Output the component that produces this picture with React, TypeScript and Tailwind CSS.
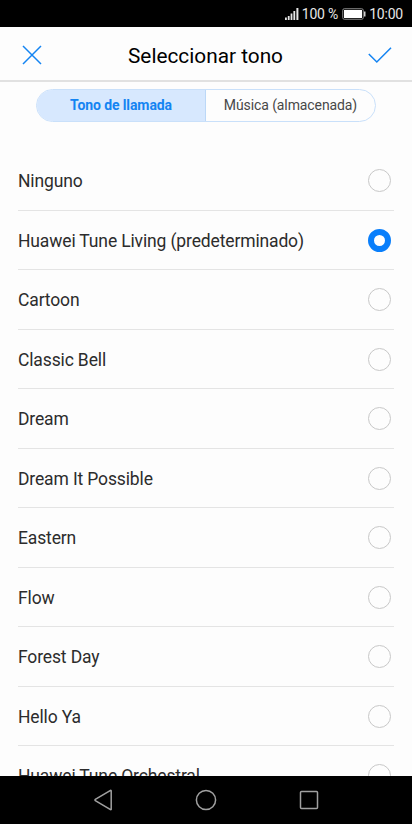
import { useState } from 'react';
import clsx from 'clsx';

const ringtones = [
  'Ninguno',
  'Huawei Tune Living (predeterminado)',
  'Cartoon',
  'Classic Bell',
  'Dream',
  'Dream It Possible',
  'Eastern',
  'Flow',
  'Forest Day',
  'Hello Ya',
  'Huawei Tune Orchestral',
];

function StatusBar() {
  return (
    <div className="flex h-[27px] shrink-0 items-center justify-end bg-black pr-[9px] pt-px text-[14px] leading-none tracking-[-0.2px] text-[#e6e6e6]">
      <svg width="14" height="13" viewBox="0 0 14 13" className="mr-[3px] -mt-px" fill="#e6e6e6">
        <rect x="0" y="10.5" width="1.8" height="2.5" />
        <rect x="2.8" y="9" width="1.8" height="4" />
        <rect x="5.6" y="6.5" width="1.8" height="6.5" />
        <rect x="8.4" y="4" width="1.8" height="9" />
        <rect x="11.4" y="1" width="2" height="12" />
      </svg>
      <span className="whitespace-nowrap">100 %</span>
      <svg width="24" height="12" viewBox="0 0 24 12" className="ml-[4px] mr-[3px]">
        <rect x="0.75" y="0.75" width="20.5" height="10.5" rx="1.5" fill="none" stroke="#8c8c8c" />
        <rect x="2" y="2" width="18" height="8" fill="#fff" />
        <rect x="22" y="3.5" width="1.5" height="5" fill="#d0d0d0" />
      </svg>
      <span>10:00</span>
    </div>
  );
}

function Header() {
  return (
    <header className="flex h-[55px] shrink-0 items-center justify-between border-b-2 border-[#e1e1e1] px-[20px] pt-[3px]">
      <button aria-label="Cancelar">
        <svg width="24" height="24" viewBox="0 0 24 24" fill="none" stroke="#1484f2" strokeWidth="1.5">
          <path d="M3 3l18 18M21 3L3 21" />
        </svg>
      </button>
      <h1 className="pt-[2px] pr-px text-[20.8px] leading-6 text-black">Seleccionar tono</h1>
      <button aria-label="Aceptar">
        <svg width="24" height="24" viewBox="0 0 24 24" fill="none" stroke="#1484f2" strokeWidth="1.5">
          <path d="M.8 11l8 8L23 4.7" />
        </svg>
      </button>
    </header>
  );
}

export default function App() {
  const [selected, setSelected] = useState(1);

  return (
    <div className="flex h-screen flex-col overflow-hidden bg-[#fdfdfd] font-['Roboto',sans-serif]">
      <StatusBar />
      <Header />

      <div className="mx-[36px] mt-[7px] flex h-[33px] w-[340px] shrink-0 overflow-hidden rounded-full border border-[#c9e0fa] text-[14px] tracking-[-0.1px]">
        <button className="w-[169px] border-r border-[#bcd8f7] bg-[#d7e8fe] font-bold text-[#1484f2]">
          Tono de llamada
        </button>
        <button className="flex-1 text-[#484848]">Música (almacenada)</button>
      </div>

      <ul className="mt-[29px] min-h-0 flex-1 overflow-hidden px-[18px]">
        {ringtones.map((name, index) => (
          <li
            key={name}
            className="flex h-[59.5px] items-center justify-between border-b border-[#e4e4e4] pr-[3px] pt-px"
            onClick={() => setSelected(index)}
          >
            <span className="pt-[1.5px] text-[17.5px] tracking-[-0.14px] text-[#2c2c2c]">{name}</span>
            <span
              className={clsx(
                'size-[23px] rounded-full',
                index === selected ? 'border-[6px] border-[#0a7ffb] bg-white' : 'border border-[#c8c8c8]'
              )}
            />
          </li>
        ))}
      </ul>

      <nav className="flex h-[48px] shrink-0 items-center justify-center gap-[79px] bg-black">
        <svg width="24" height="24" viewBox="0 0 24 24" fill="none" stroke="#a0a0a0" strokeWidth="1.5">
          <path d="M20.2 2.8v18.4a.4.4 0 0 1-.7.3L4.3 12.6a.7.7 0 0 1 0-1.2l15.2-8.9a.4.4 0 0 1 .7.3z" />
        </svg>
        <svg width="24" height="24" viewBox="0 0 24 24" fill="none" stroke="#a0a0a0" strokeWidth="1.5">
          <circle cx="12" cy="12" r="9.6" />
        </svg>
        <svg width="24" height="24" viewBox="0 0 24 24" fill="none" stroke="#a0a0a0" strokeWidth="1.5">
          <rect x="3.5" y="3.5" width="17" height="17" rx="1" />
        </svg>
      </nav>
    </div>
  );
}
